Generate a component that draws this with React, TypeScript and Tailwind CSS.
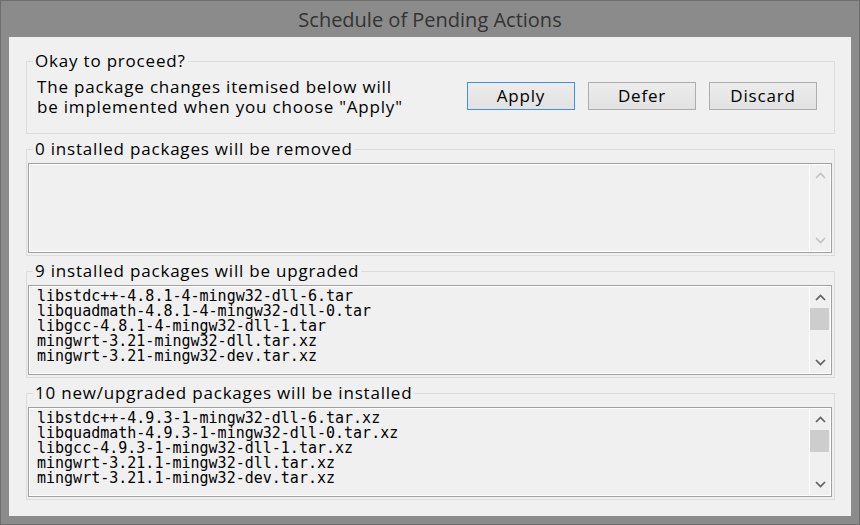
const REMOVED: string[] = []

const UPGRADED = [
  "libstdc++-4.8.1-4-mingw32-dll-6.tar",
  "libquadmath-4.8.1-4-mingw32-dll-0.tar",
  "libgcc-4.8.1-4-mingw32-dll-1.tar",
  "mingwrt-3.21-mingw32-dll.tar.xz",
  "mingwrt-3.21-mingw32-dev.tar.xz",
]

const INSTALLED = [
  "libstdc++-4.9.3-1-mingw32-dll-6.tar.xz",
  "libquadmath-4.9.3-1-mingw32-dll-0.tar.xz",
  "libgcc-4.9.3-1-mingw32-dll-1.tar.xz",
  "mingwrt-3.21.1-mingw32-dll.tar.xz",
  "mingwrt-3.21.1-mingw32-dev.tar.xz",
]

function Chevron({ up, color }: { up?: boolean; color: string }) {
  return (
    <svg width="11" height="7" viewBox="0 0 11 7" className="block">
      <path
        d={up ? "M1 6 L5.5 1.5 L10 6" : "M1 1 L5.5 5.5 L10 1"}
        fill="none"
        stroke={color}
        strokeWidth="1.7"
      />
    </svg>
  )
}

function ListBox({ items }: { items: string[] }) {
  const enabled = items.length > 0
  const arrow = enabled ? "#606060" : "#c2c2c2"
  return (
    <div className="ml-[1px] mr-[2px] mt-[4px] h-[90px] flex border border-[#a0a0a0] shadow-[inset_0_0_0_1px_#ffffff] p-[1px]">
      <div className="flex-1 pl-[7px] pt-[2px] font-['DejaVu_Sans_Mono',monospace] text-[15px] leading-[15px] text-black overflow-hidden whitespace-pre">
        {items.map((s) => (
          <div key={s}>{s}</div>
        ))}
      </div>
      <div className="w-[21px] flex flex-col border-l border-white">
        <div className="h-[21px] flex items-center justify-center">
          <Chevron up color={arrow} />
        </div>
        {enabled && <div className="h-[22px] mr-[1px] bg-[#cdcdcd]" />}
        <div className="flex-1" />
        <div className="h-[21px] flex items-center justify-center">
          <Chevron color={arrow} />
        </div>
      </div>
    </div>
  )
}

function Group({ title, children, className }: { title: string; children: React.ReactNode; className?: string }) {
  return (
    <fieldset className={`ml-[17px] mr-[16px] border border-[#dcdcdc] pb-[2px] ${className ?? ""}`}>
      <legend className="ml-[6px] px-[2px] text-[17px] leading-[20px] tracking-[0.8px] text-black">{title}</legend>
      {children}
    </fieldset>
  )
}

function Button({ label, focused }: { label: string; focused?: boolean }) {
  return (
    <button
      className={`w-[108px] h-[28px] border bg-gradient-to-b from-[#ececec] to-[#e2e2e2] text-[17px] leading-[20px] tracking-[0.8px] text-black ${
        focused ? "border-[#3c90e6]" : "border-[#adadad]"
      }`}
    >
      {label}
    </button>
  )
}

export default function App() {
  return (
    <div className="w-[860px] h-[525px] bg-[#8b8b8b] border border-[#6e6e6e] flex flex-col font-['Open_Sans',sans-serif]">
      <div className="h-[36px] flex items-center justify-center text-[20px] text-[#333333] pt-[1px]">
        Schedule of Pending Actions
      </div>
      <div className="mx-[8px] h-[479px] bg-[#f0f0f0] pt-[14px]">
        <Group title="Okay to proceed?">
          <div className="flex items-start h-[60px]">
            <div className="pl-[10px] pt-[6px] text-[17px] leading-[20px] tracking-[0.8px] text-black">
              <div>The package changes itemised below will</div>
              <div>be implemented when you choose "Apply"</div>
            </div>
            <div className="ml-auto mr-[17px] mt-[11px] flex gap-[13px]">
              <Button label="Apply" focused />
              <Button label="Defer" />
              <Button label="Discard" />
            </div>
          </div>
        </Group>
        <Group title="0 installed packages will be removed" className="mt-[5px]">
          <ListBox items={REMOVED} />
        </Group>
        <Group title="9 installed packages will be upgraded" className="mt-[5px]">
          <ListBox items={UPGRADED} />
        </Group>
        <Group title="10 new/upgraded packages will be installed" className="mt-[5px]">
          <ListBox items={INSTALLED} />
        </Group>
      </div>
    </div>
  )
}
